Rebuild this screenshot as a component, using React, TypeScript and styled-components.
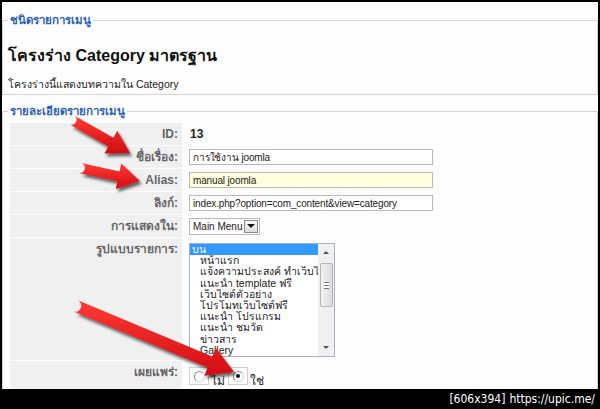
import React from 'react';
import styled, { createGlobalStyle } from 'styled-components';

const GlobalStyle = createGlobalStyle`
  html, body {
    margin: 0;
    padding: 0;
    background: #000;
  }
  body {
    font-family: "Liberation Sans", Tahoma, sans-serif;
  }
`;

const Frame = styled.div`
  position: relative;
  width: 600px;
  height: 409px;
  background: #000;
  display: flex;
  flex-direction: column;
  overflow: hidden;
`;

const Window = styled.div`
  margin: 2px 2px 0 2px;
  height: 387px;
  background: #fcfdfc;
  overflow: hidden;
  font-size: 11px;
  color: #222;
`;

const Fieldset = styled.fieldset<{ $gap: number }>`
  margin: ${({ $gap }) => $gap}px 0 0 0;
  border: 1px solid #d4d4d4;
  padding: 0 7px 3px 7px;
  min-width: 0;
`;

const Legend = styled.legend`
  margin-left: -2px;
  padding: 0 2px;
  font-size: 11.5px;
  line-height: 16px;
  font-weight: bold;
  color: #2c5fb8;
`;

const Title = styled.h1`
  margin: 17px 0 0 -2px;
  font-size: 16px;
  line-height: 22px;
  font-weight: bold;
  color: #111;
`;

const Description = styled.p`
  margin: 10px 0 0 -2px;
  line-height: 14px;
  font-size: 10.5px;
`;

const Grid = styled.div`
  margin: 4px 0 0 0;
  display: grid;
  grid-template-columns: 172px 1fr;
  column-gap: 2px;
  row-gap: 1px;
`;

const Label = styled.div<{ $h: number }>`
  height: ${({ $h }) => $h}px;
  box-sizing: border-box;
  padding: 4px 4px 0 0;
  background: #f0f0f0;
  text-align: right;
  font-size: 12px;
  line-height: 14px;
  font-weight: bold;
  color: #666;
`;

const Value = styled.div<{ $top?: number }>`
  display: flex;
  align-items: ${({ $top }) => ($top !== undefined ? 'flex-start' : 'center')};
  padding: ${({ $top }) => $top ?? 0}px 0 0 5px;
`;

const IdText = styled.span`
  font-size: 12px;
  font-weight: bold;
  padding-left: 1px;
`;

const TextInput = styled.input<{ $tint?: boolean }>`
  width: 244px;
  height: 16px;
  box-sizing: border-box;
  border: 1px solid #b8b8b8;
  padding: 0 3px;
  background: ${({ $tint }) => ($tint ? '#ffffdd' : '#fff')};
  font: 10px "Liberation Sans", Tahoma, sans-serif;
  letter-spacing: -0.15px;
  color: #222;
  outline: none;
`;

const Select = styled.div`
  width: 71px;
  height: 17px;
  box-sizing: border-box;
  border: 1px solid #b8b8b8;
  background: #fff;
  display: flex;
  align-items: center;
  justify-content: space-between;
  padding-left: 3px;
  font-size: 10px;
  white-space: nowrap;
`;

const DropButton = styled.div`
  width: 14px;
  height: 13px;
  margin-right: 1px;
  box-sizing: border-box;
  border: 1px solid #888;
  background: linear-gradient(#fafafa, #dcdcdc);
  display: flex;
  align-items: center;
  justify-content: center;
  &::after {
    content: '';
    border-left: 4px solid transparent;
    border-right: 4px solid transparent;
    border-top: 4px solid #111;
  }
`;

const ListBox = styled.div`
  width: 146px;
  height: 114px;
  box-sizing: border-box;
  border: 1px solid #a9b1ba;
  background: #fff;
  display: flex;
`;

const Items = styled.div`
  flex: 1;
  overflow: hidden;
`;

const Item = styled.div<{ $selected?: boolean }>`
  height: 11.2px;
  line-height: 11.2px;
  font-size: 10.5px;
  white-space: nowrap;
  overflow: hidden;
  padding-left: ${({ $selected }) => ($selected ? 2 : 10)}px;
  background: ${({ $selected }) => ($selected ? '#3399ff' : 'transparent')};
  color: ${({ $selected }) => ($selected ? '#fff' : '#222')};
`;

const ScrollTrack = styled.div`
  width: 16px;
  background: #f0f0f0;
  display: flex;
  flex-direction: column;
  align-items: center;
`;

const ScrollArrow = styled.div<{ $down?: boolean }>`
  height: 17px;
  display: flex;
  align-items: center;
  justify-content: center;
  &::after {
    content: '';
    border-left: 3px solid transparent;
    border-right: 3px solid transparent;
    ${({ $down }) => ($down ? 'border-top: 3px solid #555;' : 'border-bottom: 3px solid #555;')}
  }
`;

const Thumb = styled.div`
  width: 13px;
  height: 44px;
  margin-top: 2px;
  box-sizing: border-box;
  border: 1px solid #b5b5b5;
  border-radius: 2px;
  background: linear-gradient(90deg, #f2f2f2, #dcdcdc);
  display: flex;
  align-items: center;
  justify-content: center;
  &::after {
    content: '';
    width: 5px;
    height: 5px;
    border-top: 1px solid #777;
    border-bottom: 1px solid #777;
    background: linear-gradient(#fff 0 2px, #777 2px 3px, #fff 3px);
  }
`;

const Spacer = styled.div`
  flex: 1;
`;

const RadioBox = styled.div`
  width: 20px;
  height: 18px;
  box-sizing: border-box;
  border: 1px solid #cfcfcf;
  background: #fff;
  display: flex;
  align-items: center;
  justify-content: center;
`;

const RadioDot = styled.span<{ $checked?: boolean }>`
  width: 11px;
  height: 11px;
  box-sizing: border-box;
  border-radius: 50%;
  border: 1px solid #999;
  border-color: #8a8a8a #d8d8d8 #d8d8d8 #8a8a8a;
  background: #fff;
  display: flex;
  align-items: center;
  justify-content: center;
  &::after {
    content: '';
    width: 4px;
    height: 4px;
    border-radius: 50%;
    background: ${({ $checked }) => ($checked ? '#111' : 'transparent')};
  }
`;

const RadioText = styled.span`
  font-size: 12px;
  margin: 4px 3px 0 2px;
`;

const Footer = styled.div`
  flex: 1;
  display: flex;
  align-items: center;
  justify-content: flex-end;
  padding-right: 5px;
  color: #fff;
  font-family: "DejaVu Sans Condensed", "DejaVu Sans", sans-serif;
  font-size: 12px;
  gap: 4px;
`;

const Overlay = styled.svg`
  position: absolute;
  left: 0;
  top: 0;
  pointer-events: none;
`;

const menuItems = [
  'หน้าแรก',
  'แจ้งความประสงค์ ทำเว็บไซต์',
  'แนะนำ template ฟรี',
  'เว็บไซต์ตัวอย่าง',
  'โปรโมทเว็บไซต์ฟรี',
  'แนะนำ โปรแกรม',
  'แนะนำ ชมวัด',
  'ข่าวสาร',
  'Gallery',
];

// red pointer arrows: tail -> tip, then shaft / head width / head length
const arrows: [number, number, number, number, number, number, number][] = [
  [72, 120, 130, 153, 10, 26, 22],
  [80, 168, 140, 181, 10, 26, 22],
  [76, 306, 234, 372, 12, 30, 26],
];

function arrowPath(
  x1: number,
  y1: number,
  x2: number,
  y2: number,
  shaft: number,
  head: number,
  headLen: number,
) {
  const dx = x2 - x1;
  const dy = y2 - y1;
  const len = Math.hypot(dx, dy);
  const ux = dx / len;
  const uy = dy / len;
  const nx = -uy;
  const ny = ux;
  const bx = x2 - ux * headLen;
  const by = y2 - uy * headLen;
  const p = (x: number, y: number) => `${x.toFixed(1)} ${y.toFixed(1)}`;
  const s = shaft / 2;
  const h = head / 2;
  return [
    `M ${p(x1 + nx * s, y1 + ny * s)}`,
    `L ${p(bx + nx * s, by + ny * s)}`,
    `L ${p(bx + nx * h, by + ny * h)}`,
    `L ${p(x2, y2)}`,
    `L ${p(bx - nx * h, by - ny * h)}`,
    `L ${p(bx - nx * s, by - ny * s)}`,
    `L ${p(x1 - nx * s, y1 - ny * s)}`,
    `A ${s} ${s} 0 0 1 ${p(x1 + nx * s, y1 + ny * s)}`,
    'Z',
  ].join(' ');
}

export default function App() {
  return (
    <>
      <GlobalStyle />
      <Frame>
        <Window>
          <Fieldset $gap={10}>
            <Legend>ชนิดรายการเมนู</Legend>
            <Title>โครงร่าง Category มาตรฐาน</Title>
            <Description>โครงร่างนี้แสดงบทความใน Category</Description>
          </Fieldset>
          <Fieldset $gap={8}>
            <Legend>รายละเอียดรายการเมนู</Legend>
            <Grid>
              <Label $h={22}>ID:</Label>
              <Value>
                <IdText>13</IdText>
              </Value>

              <Label $h={22}>ชื่อเรื่อง:</Label>
              <Value>
                <TextInput defaultValue="การใช้งาน joomla" />
              </Value>

              <Label $h={22}>Alias:</Label>
              <Value>
                <TextInput $tint defaultValue="manual joomla" />
              </Value>

              <Label $h={22}>ลิงก์:</Label>
              <Value>
                <TextInput defaultValue="index.php?option=com_content&view=category" />
              </Value>

              <Label $h={22}>การแสดงใน:</Label>
              <Value>
                <Select>
                  Main Menu
                  <DropButton />
                </Select>
              </Value>

              <Label $h={122}>รูปแบบรายการ:</Label>
              <Value $top={5}>
                <ListBox>
                  <Items>
                    <Item $selected>บน</Item>
                    {menuItems.map((m) => (
                      <Item key={m}>{m}</Item>
                    ))}
                  </Items>
                  <ScrollTrack>
                    <ScrollArrow />
                    <Thumb />
                    <Spacer />
                    <ScrollArrow $down />
                  </ScrollTrack>
                </ListBox>
              </Value>

              <Label $h={40}>เผยแพร่:</Label>
              <Value $top={6}>
                <RadioBox>
                  <RadioDot />
                </RadioBox>
                <RadioText>ไม่</RadioText>
                <RadioBox>
                  <RadioDot $checked />
                </RadioBox>
                <RadioText>ใช่</RadioText>
              </Value>
            </Grid>
          </Fieldset>
        </Window>
        <Footer>
          <span>[606x394]</span>
          <span>https://upic.me/</span>
        </Footer>
        <Overlay width={600} height={409} viewBox="0 0 600 409">
          <defs>
            <filter id="arrowShadow" x="-20%" y="-20%" width="140%" height="140%">
              <feDropShadow dx="2" dy="3" stdDeviation="1.6" floodColor="#000" floodOpacity="0.6" />
            </filter>
            <linearGradient id="arrowFill" x1="0" y1="0" x2="0" y2="1">
              <stop offset="0" stopColor="#ff3b35" />
              <stop offset="1" stopColor="#d10d12" />
            </linearGradient>
          </defs>
          {arrows.map(([x1, y1, x2, y2, s, h, hl], i) => (
            <path key={i} d={arrowPath(x1, y1, x2, y2, s, h, hl)} fill="url(#arrowFill)" filter="url(#arrowShadow)" />
          ))}
        </Overlay>
      </Frame>
    </>
  );
}
